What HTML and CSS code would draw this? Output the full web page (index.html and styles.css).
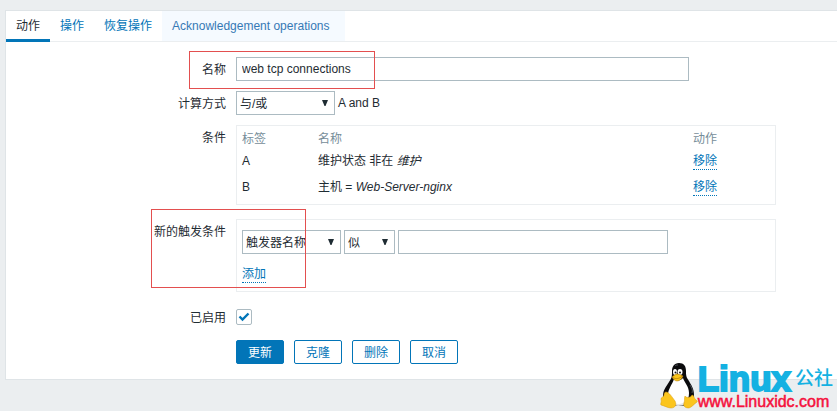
FILE: index.html
```html
<!DOCTYPE html>
<html lang="zh-CN">

<head>
    <meta charset="UTF-8">
    <meta name="viewport" content="width=device-width, initial-scale=1.0">
    <title>动作</title>
    <link rel="stylesheet" href="styles.css">
</head>

<body>
    <main class="panel">
        <nav class="tabs">
            <a class="tab active" href="#action">动作</a>
            <a class="tab" href="#operations">操作</a>
            <a class="tab" href="#recovery">恢复操作</a>
            <a class="tab hover" href="#ack">Acknowledgement operations</a>
        </nav>

        <form class="form" id="action">
            <div class="row">
                <label class="row-label" for="name">名称</label>
                <div class="row-field">
                    <input type="text" class="text-box name-box" id="name" value="web tcp connections">
                </div>
                <span class="mark mark-name"></span>
            </div>
            <div class="row">
                <label class="row-label" for="evaltype">计算方式</label>
                <div class="row-field inline">
                    <select class="select" id="evaltype">
                        <option>与/或</option>
                    </select>
                    <span>A and B</span>
                </div>
            </div>
            <div class="row">
                <span class="row-label">条件</span>
                <div class="row-field box">
                    <table class="conditions">
                        <thead>
                            <tr>
                                <th class="col-label">标签</th>
                                <th>名称</th>
                                <th class="col-action">动作</th>
                            </tr>
                        </thead>
                        <tbody>
                            <tr>
                                <td>A</td>
                                <td>维护状态 非在 <em>维护</em></td>
                                <td><a class="link" href="#remove-a">移除</a></td>
                            </tr>
                            <tr>
                                <td>B</td>
                                <td>主机 = <em>Web-Server-nginx</em></td>
                                <td><a class="link" href="#remove-b">移除</a></td>
                            </tr>
                        </tbody>
                    </table>
                </div>
            </div>
            <div class="row row-new">
                <label class="row-label" for="condition">新的触发条件</label>
                <div class="row-field box new-condition">
                    <div class="inline">
                        <select class="select" id="condition">
                            <option>触发器名称</option>
                        </select>
                        <select class="select select-small" aria-label="运算符">
                            <option>似</option>
                        </select>
                        <input type="text" class="text-box value-box" aria-label="值">
                    </div>
                    <div><a class="link" href="#add">添加</a></div>
                </div>
                <span class="mark mark-new"></span>
            </div>
            <div class="row row-enabled">
                <label class="row-label" for="enabled">已启用</label>
                <div class="row-field inline">
                    <input type="checkbox" class="check" id="enabled" checked>
                </div>
            </div>
            <div class="row row-buttons">
                <div class="row-field buttons">
                    <button type="button" class="btn primary">更新</button>
                    <button type="button" class="btn">克隆</button>
                    <button type="button" class="btn">删除</button>
                    <button type="button" class="btn">取消</button>
                </div>
            </div>
        </form>
    </main>

    <div class="watermark">
        <svg class="tux" viewBox="0 0 38 46" width="38" height="46" aria-hidden="true">
            <path fill="#0b0b0d" d="M19 0c-5 0-7 4-7 8 0 5 0 7-3 11-3 5-6 8-6 14 0 6 5 10 15 10s16-3 16-11c0-7-3-10-5-14-3-4-3-6-3-10 0-5-2-8-7-8z"/>
            <path fill="#fff" d="M14 16c2 2 7 2 9-1 1 4 6 8 6 15 0 8-4 12-11 12-6 0-10-4-10-10 0-6 4-10 6-16z"/>
            <path fill="#e4e5e7" d="M10 36c2 3 5 5 9 5 4 0 7-3 9-7 0 6-4 9-10 9-4 0-7-3-8-7z"/>
            <ellipse cx="15" cy="9" rx="2" ry="3" fill="#fff"/>
            <ellipse cx="20" cy="9" rx="2.500" ry="3" fill="#fff"/>
            <circle cx="15.500" cy="9.500" r="1" fill="#111"/>
            <circle cx="20" cy="9.500" r="1" fill="#111"/>
            <path fill="#f8c51b" stroke="#b67a0a" stroke-width=".5" d="M12 14c2-2 4-3 5-3 2 0 4 1 6 2-1 3-4 5-6 5s-4-2-5-4z"/>
            <path fill="none" stroke="#a66c08" stroke-width=".6" d="M13 14.500c3 2 6 1 9-1"/>
            <path fill="#fbc51e" stroke="#d99a10" stroke-width=".5" d="M6 29c3 0 6 5 9 9 2 4 0 7-4 7-3 0-6-2-10-3-1-1 1-3 0-6 0-2 3-2 3-4 0-2 1-3 2-3z"/>
            <path fill="#fbc51e" stroke="#d99a10" stroke-width=".5" d="M25 33c1 2 6 2 7-1 2 0 2 3 3 4 1 1 3 2 2 3-3 2-5 5-8 6-4 0-6-2-5-5 1-3 0-5 1-7z"/>
            <path fill="none" stroke="#666b75" stroke-width=".7" d="M15 3c1-1 2-1 3-1M30 22c2 3 3 5 2 8"/>
        </svg>
        <div class="brand">
            <div class="brand-name">Linux<span class="brand-cn">公社</span></div>
            <div class="brand-url">www.Linuxidc.com</div>
        </div>
    </div>
</body>

</html>
```
FILE: styles.css
```css
* {
    box-sizing: border-box;
}

body {
    margin: 0;
    padding: 10px 0 0 5px;
    min-height: 100vh;
    position: relative;
    font-family: "Liberation Sans", "Noto Sans CJK SC", sans-serif;
    font-size: 12px;
    line-height: 18px;
    color: #1f2c33;
    background-color: #ebeef0;
}

a {
    color: #0275b8;
    text-decoration: none;
}

.panel {
    background: #fff;
    border: 1px solid #dfe4e7;
    border-right: 0;
    padding-bottom: 15px;
}

/* tabs */
.tabs {
    display: flex;
    height: 31px;
    border-bottom: 1px solid #ebeef0;
}

.tab {
    height: 31px;
    padding: 0 10px;
    line-height: 30px;
}

.tab.active {
    color: #1f2c33;
    border-bottom: 3px solid #0275b8;
}

.tab.hover {
    height: 30px;
    min-width: 183px;
    color: #3579b5;
    background: #f5faff;
}

/* form rows */
.form {
    display: flex;
    flex-direction: column;
    gap: 10px;
    padding-top: 15px;
}

.row {
    display: grid;
    grid-template-columns: 220px 1fr;
    column-gap: 10px;
    position: relative;
}

.row-label {
    grid-column: 1;
    text-align: right;
    line-height: 26px;
    height: 24px;
}

.row-field {
    grid-column: 2;
}

.row-new {
    margin-top: 4px;
}

.row-enabled {
    margin-top: 3px;
}

.row-buttons {
    margin-top: 1px;
}

.inline {
    display: flex;
    align-items: center;
    gap: 3px;
}

.text-box {
    display: block;
    height: 24px;
    padding: 0 5px;
    font: inherit;
    color: inherit;
    background: #fff;
    border: 1px solid #acbbc2;
    border-radius: 0;
}

.name-box {
    width: 453px;
}

.value-box {
    width: 270px;
}

.select {
    width: 99px;
    height: 24px;
    padding: 1px 3px 0;
    font: inherit;
    color: inherit;
    appearance: none;
    border: 1px solid #acbbc2;
    border-radius: 0;
    background: #fff url("data:image/svg+xml,%3Csvg xmlns='http://www.w3.org/2000/svg' width='8' height='7'%3E%3Cpath fill='%231f2c33' d='M1 0h6L4.500 6h-1z'/%3E%3C/svg%3E") no-repeat right 5px center;
}

.select-small {
    width: 51px;
}

.box {
    width: 540px;
    border: 1px solid #ebeef0;
    padding: 4px 5px;
}

.conditions {
    width: 100%;
    border-collapse: collapse;
    table-layout: fixed;
}

.conditions th {
    height: 18px;
    padding: 0;
    font-weight: normal;
    text-align: left;
    color: #768d99;
}

.conditions td {
    height: 26px;
    padding: 0;
}

.conditions .col-label {
    width: 76px;
}

.conditions .col-action {
    width: 77px;
}

.link {
    display: inline-block;
    line-height: 15px;
    border-bottom: 1px dotted #0275b8;
}

.new-condition {
    padding: 10px 5px 8px;
}

.new-condition .inline {
    margin-bottom: 11px;
}

.check {
    width: 16px;
    height: 16px;
    margin: 0;
    appearance: none;
    border: 1px solid #acbbc2;
    border-radius: 2px;
    background: #fff url("data:image/svg+xml,%3Csvg xmlns='http://www.w3.org/2000/svg' width='12' height='10'%3E%3Cpath fill='none' stroke='%230275b8' stroke-width='2.4' d='M1.500 4.500l3 3 6-6'/%3E%3C/svg%3E") no-repeat center;
}

.buttons {
    display: flex;
    gap: 10px;
}

.btn {
    min-width: 48px;
    height: 24px;
    padding: 1px 10px 0;
    font: inherit;
    color: #0275b8;
    background: #fff;
    border: 1px solid #0275b8;
    border-radius: 2px;
}

.btn.primary {
    color: #fff;
    background: #0275b8;
}

/* red highlight frames over the form */
.mark {
    position: absolute;
    border: 1px solid #e34f4f;
    pointer-events: none;
}

.mark-name {
    top: -6px;
    left: 183px;
    width: 186px;
    height: 38px;
}

.mark-new {
    top: -10px;
    left: 145px;
    width: 155px;
    height: 79px;
}

.watermark {
    position: absolute;
    right: 4px;
    bottom: 0;
    display: flex;
    align-items: flex-end;
}

.tux {
    margin-bottom: 2px;
}

.brand-name {
    display: flex;
    align-items: flex-end;
    margin-bottom: 2px;
    font-weight: bold;
    font-size: 35px;
    line-height: 24px;
    color: #14b1e2;
    -webkit-text-stroke: 2px #14b1e2;
}

.brand-cn {
    margin-left: 4px;
    font-weight: 500;
    font-size: 19px;
    -webkit-text-stroke: 0;
}

.brand-url {
    font-size: 16px;
    line-height: 18px;
    color: #f5103c;
    -webkit-text-stroke: 0.5px #f5103c;
}
```
